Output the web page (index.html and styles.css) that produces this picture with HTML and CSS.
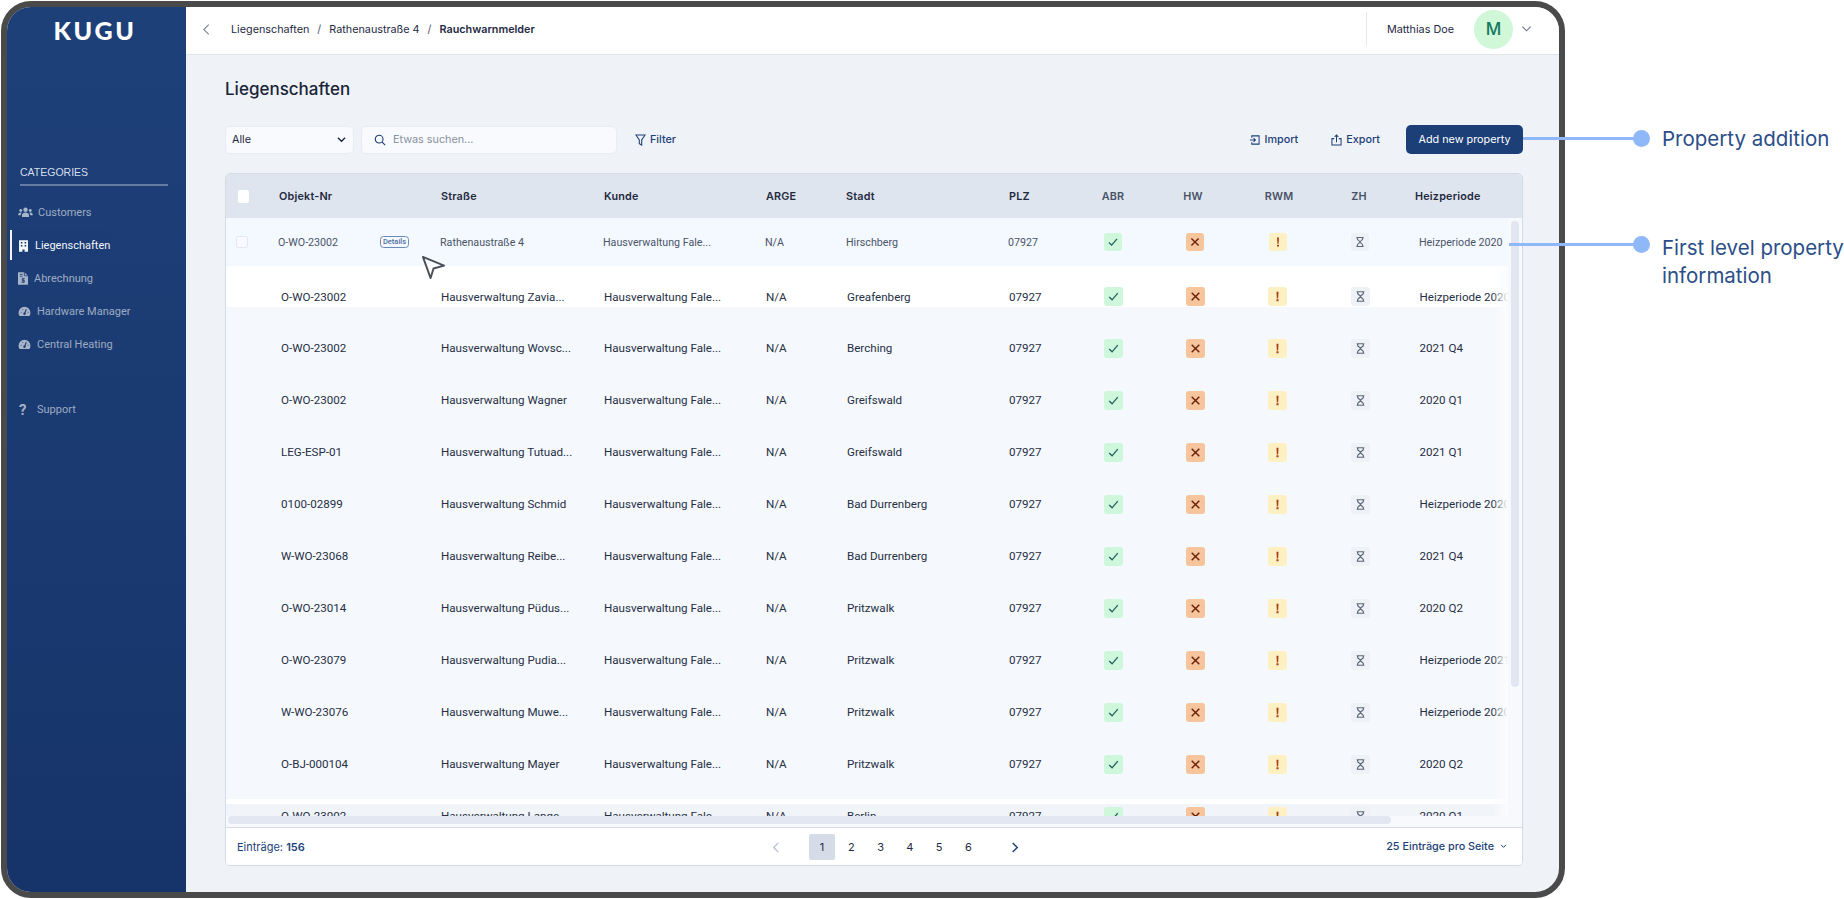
FILE: index.html
```html
<!DOCTYPE html>
<html lang="de">
<head>
<meta charset="utf-8">
<title>Liegenschaften</title>
<link rel="stylesheet" href="styles.css">
</head>
<body>
<svg class="defs" width="0" height="0" aria-hidden="true">
  <symbol id="i-check" viewBox="0 0 20 20"><path d="M5.5 10.5l3 3 6-7" fill="none" stroke="#24605f" stroke-width="1.4"/></symbol>
  <symbol id="i-x" viewBox="0 0 20 20"><path d="M6 6l8 8M14 6l-8 8" fill="none" stroke="#6e1f0c" stroke-width="1.5"/></symbol>
  <symbol id="i-excl" viewBox="0 0 20 20"><path d="M8.900 5h2.200l-.4 7H9.300zM8.900 13h2.200v2H8.900z" fill="#a8421a"/></symbol>
  <symbol id="i-hour" viewBox="0 0 20 20"><path d="M6 5h8M6 15h8M7 5v1.5c0 1.5 3 2.3 3 3.5s-3 2-3 3.5V15M13 5v1.5c0 1.5-3 2.3-3 3.5s3 2 3 3.500V15" fill="none" stroke="#5d6778" stroke-width="1.3"/></symbol>
  <symbol id="i-gauge" viewBox="0 0 14 12"><path d="M7 .8a6.5 6.5 0 0 0-6.5 6.5c0 1.4.4 2.6 1.1 3.7h10.800c.7-1.1 1.1-2.3 1.1-3.7A6.5 6.5 0 0 0 7 .8z" fill="currentColor"/><path d="M7 8.5L9 3.5M3 7h.6M10.600 7h.6M5 3.5l.4.6" stroke="#1b3b72" stroke-width="1.2" fill="none"/><circle cx="7" cy="8.5" r="1.3" fill="#1b3b72"/></symbol>
</svg>

<div class="stage">
  <div class="frame">
    <aside class="sidebar">
      <div class="logo">KUGU</div>
      <div class="cat-label">CATEGORIES</div>
      <nav class="nav">
        <a class="nav-item">
          <svg class="nav-ic ic-users" viewBox="0 0 16 12"><circle cx="8" cy="3" r="2.4" fill="currentColor"/><circle cx="2.8" cy="3.8" r="1.6" fill="currentColor"/><circle cx="13.2" cy="3.8" r="1.6" fill="currentColor"/><path d="M4.2 11V9c0-2 1.6-3 3.8-3s3.8 1 3.8 3v2zM0 9c0-2 1-3 2.8-3 .5 0 .8.1 1 .2C3 7 2.9 8 2.9 9zM16 9c0-2-1-3-2.8-3-.5 0-.8.1-1 .2.8.8.9 1.8.9 2.8z" fill="currentColor"/></svg>
          <span>Customers</span>
        </a>
        <a class="nav-item nav-active">
          <svg class="nav-ic ic-build" viewBox="0 0 10 13"><path d="M0 0h10v13H6.2v-2.6H3.8V13H0z" fill="currentColor"/><path d="M2 2h1.8v1.8H2zM6.2 2H8v1.8H6.2zM2 5.3h1.8v1.8H2zM6.2 5.3H8v1.8H6.2z" fill="#1d3e76"/></svg>
          <span>Liegenschaften</span>
        </a>
        <a class="nav-item">
          <svg class="nav-ic ic-file" viewBox="0 0 11 14"><path d="M0 0h7l4 4v10H0z" fill="currentColor"/><path d="M7 0v4h4M2 2.5h3M2 4.5h3" stroke="#1c3d75" stroke-width=".9" fill="none"/><path d="M7.5 7.2H4.6v1.9h2.4V11H3.8M5.6 6.2V12" stroke="#1c3d75" stroke-width=".9" fill="none"/></svg>
          <span>Abrechnung</span>
        </a>
        <a class="nav-item">
          <svg class="nav-ic ic-gauge"><use href="#i-gauge"/></svg>
          <span>Hardware Manager</span>
        </a>
        <a class="nav-item">
          <svg class="nav-ic ic-gauge"><use href="#i-gauge"/></svg>
          <span>Central Heating</span>
        </a>
        <a class="nav-item nav-support">
          <span class="nav-q">?</span>
          <span>Support</span>
        </a>
      </nav>
    </aside>

    <div class="main">
      <header class="topbar">
        <svg class="back" viewBox="0 0 10 14"><path d="M7.5 1.5L2 7l5.500 5.500" fill="none" stroke="#7b8494" stroke-width="1.200"/></svg>
        <div class="crumbs"><span>Liegenschaften</span><i>/</i><span>Rathenaustraße 4</span><i>/</i><b>Rauchwarnmelder</b></div>
        <div class="user">
          <span class="user-name">Matthias Doe</span>
          <span class="avatar">M</span>
          <svg class="user-chev" viewBox="0 0 12 8"><path d="M1.500 1.500L6 6l4.500-4.500" fill="none" stroke="#6b7585" stroke-width="1.200"/></svg>
        </div>
      </header>

      <div class="content">
        <h1 class="title">Liegenschaften</h1>

        <div class="toolbar">
          <div class="select"><span>Alle</span><svg viewBox="0 0 10 7"><path d="M1 1.500l4 4 4-4" fill="none" stroke="#1c2a44" stroke-width="1.500"/></svg></div>
          <div class="search">
            <svg viewBox="0 0 14 14"><circle cx="6" cy="6" r="4.500" fill="none" stroke="#1d3f78" stroke-width="1.300"/><path d="M9.500 9.500L13 13" stroke="#1d3f78" stroke-width="1.300"/></svg>
            <span>Etwas suchen...</span>
          </div>
          <a class="tool tool-filter"><svg viewBox="0 0 12 13"><path d="M1 1h10L7.300 6.500V12L4.700 10.500v-4z" fill="none" stroke="#1d3f78" stroke-width="1.200"/></svg><span>Filter</span></a>
          <a class="tool tool-import"><svg viewBox="0 0 12 12"><path d="M3 3.500V1.500h8v9H3v-2M1 6h6M5 4l2 2-2 2" fill="none" stroke="#1d3f78" stroke-width="1.100"/></svg><span>Import</span></a>
          <a class="tool tool-export"><svg viewBox="0 0 12 13"><path d="M3.500 5H1v7h10V5H8.500M6 9V1M4 3l2-2 2 2" fill="none" stroke="#1d3f78" stroke-width="1.100"/></svg><span>Export</span></a>
          <button class="primary">Add new property</button>
        </div>

        <section class="table">
          <div class="thead">
            <span class="th"><span class="cb cb-head"></span></span>
            <span class="th">Objekt-Nr</span>
            <span class="th">Straße</span>
            <span class="th">Kunde</span>
            <span class="th">ARGE</span>
            <span class="th">Stadt</span>
            <span class="th">PLZ</span>
            <span class="th th-c">ABR</span>
            <span class="th th-c">HW</span>
            <span class="th th-c">RWM</span>
            <span class="th th-c">ZH</span>
            <span class="th th-h">Heizperiode</span>
          </div>

          <div class="tbody">
            <div class="scroll">
              <div class="row row-first">
                <span class="cell"><span class="cb"></span></span>
                <span class="cell obj"><span>O-WO-23002</span><span class="badge">Details</span></span>
                <span class="cell">Rathenaustraße 4</span><span class="cell">Hausverwaltung Fale...</span><span class="cell">N/A</span><span class="cell">Hirschberg</span><span class="cell">07927</span>
                <span class="cell-c"><span class="st st-ok"><svg><use href="#i-check"/></svg></span></span>
                <span class="cell-c"><span class="st st-no"><svg><use href="#i-x"/></svg></span></span>
                <span class="cell-c"><span class="st st-warn"><svg><use href="#i-excl"/></svg></span></span>
                <span class="cell-c"><span class="st st-wait"><svg><use href="#i-hour"/></svg></span></span>
                <span class="cell heiz">Heizperiode 2020</span>
              </div>

              <div class="row row-white">
                <span class="cell"></span><span class="cell obj">O-WO-23002</span><span class="cell">Hausverwaltung Zavia...</span><span class="cell">Hausverwaltung Fale...</span><span class="cell">N/A</span><span class="cell">Greafenberg</span><span class="cell">07927</span>
                <span class="cell-c"><span class="st st-ok"><svg><use href="#i-check"/></svg></span></span><span class="cell-c"><span class="st st-no"><svg><use href="#i-x"/></svg></span></span><span class="cell-c"><span class="st st-warn"><svg><use href="#i-excl"/></svg></span></span><span class="cell-c"><span class="st st-wait"><svg><use href="#i-hour"/></svg></span></span>
                <span class="cell heiz">Heizperiode 2020</span>
              </div>

              <div class="row">
                <span class="cell"></span><span class="cell obj">O-WO-23002</span><span class="cell">Hausverwaltung Wovsc...</span><span class="cell">Hausverwaltung Fale...</span><span class="cell">N/A</span><span class="cell">Berching</span><span class="cell">07927</span>
                <span class="cell-c"><span class="st st-ok"><svg><use href="#i-check"/></svg></span></span><span class="cell-c"><span class="st st-no"><svg><use href="#i-x"/></svg></span></span><span class="cell-c"><span class="st st-warn"><svg><use href="#i-excl"/></svg></span></span><span class="cell-c"><span class="st st-wait"><svg><use href="#i-hour"/></svg></span></span>
                <span class="cell heiz">2021 Q4</span>
              </div>

              <div class="row">
                <span class="cell"></span><span class="cell obj">O-WO-23002</span><span class="cell">Hausverwaltung Wagner</span><span class="cell">Hausverwaltung Fale...</span><span class="cell">N/A</span><span class="cell">Greifswald</span><span class="cell">07927</span>
                <span class="cell-c"><span class="st st-ok"><svg><use href="#i-check"/></svg></span></span><span class="cell-c"><span class="st st-no"><svg><use href="#i-x"/></svg></span></span><span class="cell-c"><span class="st st-warn"><svg><use href="#i-excl"/></svg></span></span><span class="cell-c"><span class="st st-wait"><svg><use href="#i-hour"/></svg></span></span>
                <span class="cell heiz">2020 Q1</span>
              </div>

              <div class="row">
                <span class="cell"></span><span class="cell obj">LEG-ESP-01</span><span class="cell">Hausverwaltung Tutuad...</span><span class="cell">Hausverwaltung Fale...</span><span class="cell">N/A</span><span class="cell">Greifswald</span><span class="cell">07927</span>
                <span class="cell-c"><span class="st st-ok"><svg><use href="#i-check"/></svg></span></span><span class="cell-c"><span class="st st-no"><svg><use href="#i-x"/></svg></span></span><span class="cell-c"><span class="st st-warn"><svg><use href="#i-excl"/></svg></span></span><span class="cell-c"><span class="st st-wait"><svg><use href="#i-hour"/></svg></span></span>
                <span class="cell heiz">2021 Q1</span>
              </div>

              <div class="row">
                <span class="cell"></span><span class="cell obj">0100-02899</span><span class="cell">Hausverwaltung Schmid</span><span class="cell">Hausverwaltung Fale...</span><span class="cell">N/A</span><span class="cell">Bad Durrenberg</span><span class="cell">07927</span>
                <span class="cell-c"><span class="st st-ok"><svg><use href="#i-check"/></svg></span></span><span class="cell-c"><span class="st st-no"><svg><use href="#i-x"/></svg></span></span><span class="cell-c"><span class="st st-warn"><svg><use href="#i-excl"/></svg></span></span><span class="cell-c"><span class="st st-wait"><svg><use href="#i-hour"/></svg></span></span>
                <span class="cell heiz">Heizperiode 2020</span>
              </div>

              <div class="row">
                <span class="cell"></span><span class="cell obj">W-WO-23068</span><span class="cell">Hausverwaltung Reibe...</span><span class="cell">Hausverwaltung Fale...</span><span class="cell">N/A</span><span class="cell">Bad Durrenberg</span><span class="cell">07927</span>
                <span class="cell-c"><span class="st st-ok"><svg><use href="#i-check"/></svg></span></span><span class="cell-c"><span class="st st-no"><svg><use href="#i-x"/></svg></span></span><span class="cell-c"><span class="st st-warn"><svg><use href="#i-excl"/></svg></span></span><span class="cell-c"><span class="st st-wait"><svg><use href="#i-hour"/></svg></span></span>
                <span class="cell heiz">2021 Q4</span>
              </div>

              <div class="row">
                <span class="cell"></span><span class="cell obj">O-WO-23014</span><span class="cell">Hausverwaltung Püdus...</span><span class="cell">Hausverwaltung Fale...</span><span class="cell">N/A</span><span class="cell">Pritzwalk</span><span class="cell">07927</span>
                <span class="cell-c"><span class="st st-ok"><svg><use href="#i-check"/></svg></span></span><span class="cell-c"><span class="st st-no"><svg><use href="#i-x"/></svg></span></span><span class="cell-c"><span class="st st-warn"><svg><use href="#i-excl"/></svg></span></span><span class="cell-c"><span class="st st-wait"><svg><use href="#i-hour"/></svg></span></span>
                <span class="cell heiz">2020 Q2</span>
              </div>

              <div class="row">
                <span class="cell"></span><span class="cell obj">O-WO-23079</span><span class="cell">Hausverwaltung Pudia...</span><span class="cell">Hausverwaltung Fale...</span><span class="cell">N/A</span><span class="cell">Pritzwalk</span><span class="cell">07927</span>
                <span class="cell-c"><span class="st st-ok"><svg><use href="#i-check"/></svg></span></span><span class="cell-c"><span class="st st-no"><svg><use href="#i-x"/></svg></span></span><span class="cell-c"><span class="st st-warn"><svg><use href="#i-excl"/></svg></span></span><span class="cell-c"><span class="st st-wait"><svg><use href="#i-hour"/></svg></span></span>
                <span class="cell heiz">Heizperiode 2021</span>
              </div>

              <div class="row">
                <span class="cell"></span><span class="cell obj">W-WO-23076</span><span class="cell">Hausverwaltung Muwe...</span><span class="cell">Hausverwaltung Fale...</span><span class="cell">N/A</span><span class="cell">Pritzwalk</span><span class="cell">07927</span>
                <span class="cell-c"><span class="st st-ok"><svg><use href="#i-check"/></svg></span></span><span class="cell-c"><span class="st st-no"><svg><use href="#i-x"/></svg></span></span><span class="cell-c"><span class="st st-warn"><svg><use href="#i-excl"/></svg></span></span><span class="cell-c"><span class="st st-wait"><svg><use href="#i-hour"/></svg></span></span>
                <span class="cell heiz">Heizperiode 2020</span>
              </div>

              <div class="row">
                <span class="cell"></span><span class="cell obj">O-BJ-000104</span><span class="cell">Hausverwaltung Mayer</span><span class="cell">Hausverwaltung Fale...</span><span class="cell">N/A</span><span class="cell">Pritzwalk</span><span class="cell">07927</span>
                <span class="cell-c"><span class="st st-ok"><svg><use href="#i-check"/></svg></span></span><span class="cell-c"><span class="st st-no"><svg><use href="#i-x"/></svg></span></span><span class="cell-c"><span class="st st-warn"><svg><use href="#i-excl"/></svg></span></span><span class="cell-c"><span class="st st-wait"><svg><use href="#i-hour"/></svg></span></span>
                <span class="cell heiz">2020 Q2</span>
              </div>

              <div class="row row-last">
                <span class="cell"></span><span class="cell obj">O-WO-23002</span><span class="cell">Hausverwaltung Lange</span><span class="cell">Hausverwaltung Fale...</span><span class="cell">N/A</span><span class="cell">Berlin</span><span class="cell">07927</span>
                <span class="cell-c"><span class="st st-ok"><svg><use href="#i-check"/></svg></span></span><span class="cell-c"><span class="st st-no"><svg><use href="#i-x"/></svg></span></span><span class="cell-c"><span class="st st-warn"><svg><use href="#i-excl"/></svg></span></span><span class="cell-c"><span class="st st-wait"><svg><use href="#i-hour"/></svg></span></span>
                <span class="cell heiz">2020 Q1</span>
              </div>
            </div>
            <div class="vrail"><div class="vthumb"></div></div>
          </div>

          <div class="hrail"><div class="hthumb"></div></div>

          <footer class="tfoot">
            <div class="count">Einträge: <b>156</b></div>
            <div class="pager">
              <svg class="pg-arrow pg-prev" viewBox="0 0 8 12"><path d="M6.500 1L1.500 6l5 5" fill="none" stroke="#b6bfcd" stroke-width="1.400"/></svg>
              <span class="pg pg-on">1</span><span class="pg">2</span><span class="pg">3</span><span class="pg">4</span><span class="pg">5</span><span class="pg">6</span>
              <svg class="pg-arrow pg-next" viewBox="0 0 8 12"><path d="M1.500 1l5 5-5 5" fill="none" stroke="#1d3f78" stroke-width="1.600"/></svg>
            </div>
            <div class="perpage"><span>25 Einträge pro Seite</span><svg viewBox="0 0 8 6"><path d="M1 1l3 3 3-3" fill="none" stroke="#1d3f78" stroke-width="1.200"/></svg></div>
          </footer>
        </section>
      </div>
    </div>
  </div>

  <svg class="cursor" viewBox="0 0 26 26"><path d="M2 2l22 9-11 3-3 10z" fill="#fff" fill-opacity=".4" stroke="#4a4f57" stroke-width="2" stroke-linejoin="round"/></svg>

  <div class="note note-add"><span class="note-line"></span><span class="note-dot"></span><p class="note-text">Property addition</p></div>
  <div class="note note-info"><span class="note-line"></span><span class="note-dot"></span><p class="note-text">First level property<br>information</p></div>
</div>
</body>
</html>
```

FILE: styles.css
```css
* { box-sizing: border-box; }
html, body { margin: 0; padding: 0; background: #fff; }
body { font-family: Inter, "Liberation Sans", sans-serif; color: #1f2a44; overflow: hidden; }
.defs { position: absolute; }
.stage { position: relative; width: 1844px; height: 899px; overflow: hidden; padding: 1px 0 0 1px; }

.frame { width: 1564px; height: 897px; border: 6px solid #4a4a4a; border-radius: 30px; overflow: hidden; display: flex; background: #eff2f7; }

/* sidebar */
.sidebar { width: 179px; flex: none; background: linear-gradient(#1e4079, #16346a); padding: 11px 0 0 0; }
.logo { font-family: Lato, sans-serif; font-weight: 900; font-size: 25px; line-height: 24px; letter-spacing: 2.6px; color: #fff; text-align: center; margin-left: -3px; }
.cat-label { font-family: "Liberation Sans", sans-serif; font-size: 10.5px; line-height: 12px; color: #d5dded; margin: 124px 0 0 13px; width: 148px; padding-bottom: 6px; border-bottom: 2px solid rgba(255, 255, 255, .32); }
.nav { margin-top: 10px; display: flex; flex-direction: column; }
.nav-item { position: relative; height: 33px; display: flex; align-items: center; padding-left: 11px; font-family: Roboto, sans-serif; font-size: 11px; color: rgba(255, 255, 255, .58); }
.nav-active { color: #fff; opacity: .95; }
.nav-active::before { content: ""; position: absolute; left: 3px; top: 1px; bottom: 2px; width: 2px; background: #fff; }
.nav-ic { flex: none; color: rgba(255, 255, 255, .62); }
.nav-active .nav-ic { color: #fff; }
.ic-users { width: 15px; height: 11px; margin-right: 5px; }
.ic-build { width: 9px; height: 12px; margin: 0 7px 0 1px; }
.ic-file { width: 10px; height: 13px; margin-right: 6px; }
.ic-gauge { width: 13px; height: 11px; margin-right: 6px; }
.nav-support { margin-top: 32px; }
.nav-q { width: 13px; margin-right: 6px; font-weight: 700; font-size: 15px; padding-left: 1px; color: rgba(255, 255, 255, .62); }

/* main */
.main { flex: 1; min-width: 0; display: flex; flex-direction: column; }
.topbar { height: 48px; flex: none; background: #fff; border-bottom: 1px solid #dfe3ea; display: flex; align-items: center; padding: 0 0 3px 16px; }
.back { width: 9px; height: 13px; margin-right: 20px; }
.crumbs { font-size: 10.800px; color: #1f2a44; display: flex; gap: 8px; }
.crumbs i { font-style: normal; color: #4a5568; }
.crumbs b { font-weight: 600; }
.user { margin-left: auto; height: 34px; border-left: 1px solid #e4e7ed; display: flex; align-items: center; padding-left: 20px; width: 193px; }
.user-name { font-size: 10.800px; width: 87px; }
.avatar { width: 39px; height: 39px; border-radius: 50%; background: #cff7d8; color: #15795d; font-size: 17px; font-weight: 500; display: flex; align-items: center; justify-content: center; }
.user-chev { width: 11px; height: 8px; margin-left: 8px; }

.content { flex: 1; padding: 0 36px 0 39px; display: flex; flex-direction: column; }
.title { margin: 24px 0 0; font-size: 17px; line-height: 20px; font-weight: 500; color: #1a2438; }

.toolbar { margin-top: 26px; height: 29px; display: flex; align-items: center; font-size: 10.800px; }
.select { width: 129px; height: 28px; background: #f9fafd; border: 1px solid #e9edf3; border-radius: 5px; display: flex; align-items: center; justify-content: space-between; padding: 0 7px 0 6px; color: #1f2a44; }
.select svg { width: 9px; height: 7px; }
.search { width: 256px; height: 28px; margin-left: 7px; background: #f9fafd; border: 1px solid #e9edf3; border-radius: 5px; display: flex; align-items: center; padding-left: 12px; color: #8791a2; gap: 7px; }
.search svg { width: 12px; height: 12px; }
.tool { display: flex; align-items: center; gap: 4px; color: #1d3f78; font-weight: 500; }
.tool svg { width: 11px; height: 12px; }
.tool-filter { margin-left: 18px; }
.tool-import { margin-left: auto; }
.tool-export { margin-left: 33px; }
.primary { margin-left: 26px; width: 117px; height: 29px; border: 0; border-radius: 5px; background: #1d3f78; color: #fff; font: 400 10.800px Inter, sans-serif; }

.table { margin-top: 19px; width: 1298px; height: 693px; border: 1px solid #d5dbe5; border-radius: 5px; overflow: hidden; display: flex; flex-direction: column; background: #f7f9fc; }
.thead, .row { display: grid; grid-template-columns: 53px 162px 163px 162px 81px 162px 63px 82px 82.5px 82.5px 82px 1fr; }
.thead { grid-template-columns: 53px 162px 163px 162px 80px 163px 63px 82px 78px 94px 66px 1fr; height: 44px; padding-top: 1px; flex: none; background: #dfe5ee; align-items: center; font-size: 10.800px; font-weight: 600; color: #1f2a3e; letter-spacing: .2px; }
.th-c { text-align: center; color: #485266; }
.th-h { padding-left: 23px; }
.cb { display: block; width: 12px; height: 12px; border-radius: 2px; background: #fff; margin-left: 11px; }
.cb-head { width: 11px; height: 13px; margin-left: 12px; }

.tbody { flex: none; height: 598px; display: flex; }
.scroll { width: 1282px; overflow: hidden; background: #f5f8fc; position: relative; }
.scroll::after { content: ""; position: absolute; top: 48px; right: 0; bottom: 0; width: 16px; background: linear-gradient(90deg, rgba(255, 255, 255, 0), #fbfcfe); }
.row { height: 52px; align-items: center; font-family: Roboto, sans-serif; font-size: 11.600px; color: #252f45; white-space: nowrap; }
.cell { overflow: hidden; min-width: 0; }
.cell-c { display: flex; justify-content: center; }
.obj { padding-left: 2px; }
.heiz { padding-left: 18.500px; }

.row-first { height: 48px; background: #f4f8ff; font-size: 10.700px; color: #4b5568; }
.row-first .cb { border: 1px solid #e3e8f0; background: #f8faff; }
.row-first .cell { margin-left: -1px; }
.row-first .heiz { margin-left: 0; padding-left: 18px; }
.row-first .obj { display: flex; align-items: center; justify-content: space-between; padding: 0 32px 0 0; }
.badge { width: 29px; height: 12px; border: 1px solid #6c8bb4; border-radius: 3.500px; font-size: 7.500px; line-height: 10px; text-align: center; color: #4f6f9c; font-weight: 500; }
.row-white { height: 56px; padding-top: 5px; background: linear-gradient(#fff 41px, transparent 41px); }
.row-last { background: linear-gradient(transparent 9px, #fff 9px, #fff 14px, #f1f4f9 14px); }

.st { display: block; width: 19px; height: 19px; border-radius: 3px; }
.st svg { display: block; width: 19px; height: 19px; }
.row-first .st, .row-first .st svg { width: 18px; height: 18px; }
.st-ok { background: #cff7dc; }
.st-no { background: #f6c59c; }
.st-warn { background: #fdf0c2; }
.st-wait { background: #eef1f6; }

.vrail { flex: 1; padding: 3px 3px 0 3px; }
.vthumb { height: 466px; background: #e1e6f1; border-radius: 4px; }
.hrail { flex: none; height: 11px; padding: 0 0 3px 2px; }
.hthumb { width: 1163px; height: 8px; background: #e2e7f1; border-radius: 4px; }

.tfoot { flex: 1; background: #fff; border-top: 1px solid #d5dbe5; display: flex; align-items: center; position: relative; font-size: 11px; color: #1d3f78; padding: 0 15px 0 11px; }
.count b { font-weight: 600; }
.pager { position: absolute; left: 546px; top: 6px; display: flex; align-items: center; height: 26px; }
.pg { width: 26px; height: 26px; margin-right: 3.300px; display: flex; align-items: center; justify-content: center; color: #1f2a44; border-radius: 2px; }
.pg-on { background: #d5dce8; }
.pg-arrow { width: 8px; height: 11px; }
.pg-prev { margin-right: 29px; }
.pg-next { margin-left: 26px; }
.perpage { margin-left: auto; display: flex; align-items: center; gap: 6px; font-weight: 500; font-size: 10.800px; }
.perpage svg { width: 7px; height: 5px; }

/* overlays */
.cursor { position: absolute; left: 421px; top: 255px; width: 25px; height: 25px; }
.note { position: absolute; }
.note-line { position: absolute; height: 3px; background: #8fb8f8; }
.note-dot { position: absolute; width: 17px; height: 17px; border-radius: 50%; background: #8fb8f8; }
.note-text { position: absolute; margin: 0; font-size: 20.500px; line-height: 28px; color: #2b4e88; white-space: nowrap; }
.note-add { left: 1523px; top: 138px; }
.note-info { left: 1509px; top: 244px; }
.note-line { left: 0; top: -1.500px; }
.note-add .note-line { width: 115px; }
.note-info .note-line { width: 129px; }
.note-add .note-dot { left: 110px; top: -8.500px; }
.note-info .note-dot { left: 124px; top: -8.500px; }
.note-add .note-text { left: 139px; top: -13px; }
.note-info .note-text { left: 153px; top: -10.500px; }
```
